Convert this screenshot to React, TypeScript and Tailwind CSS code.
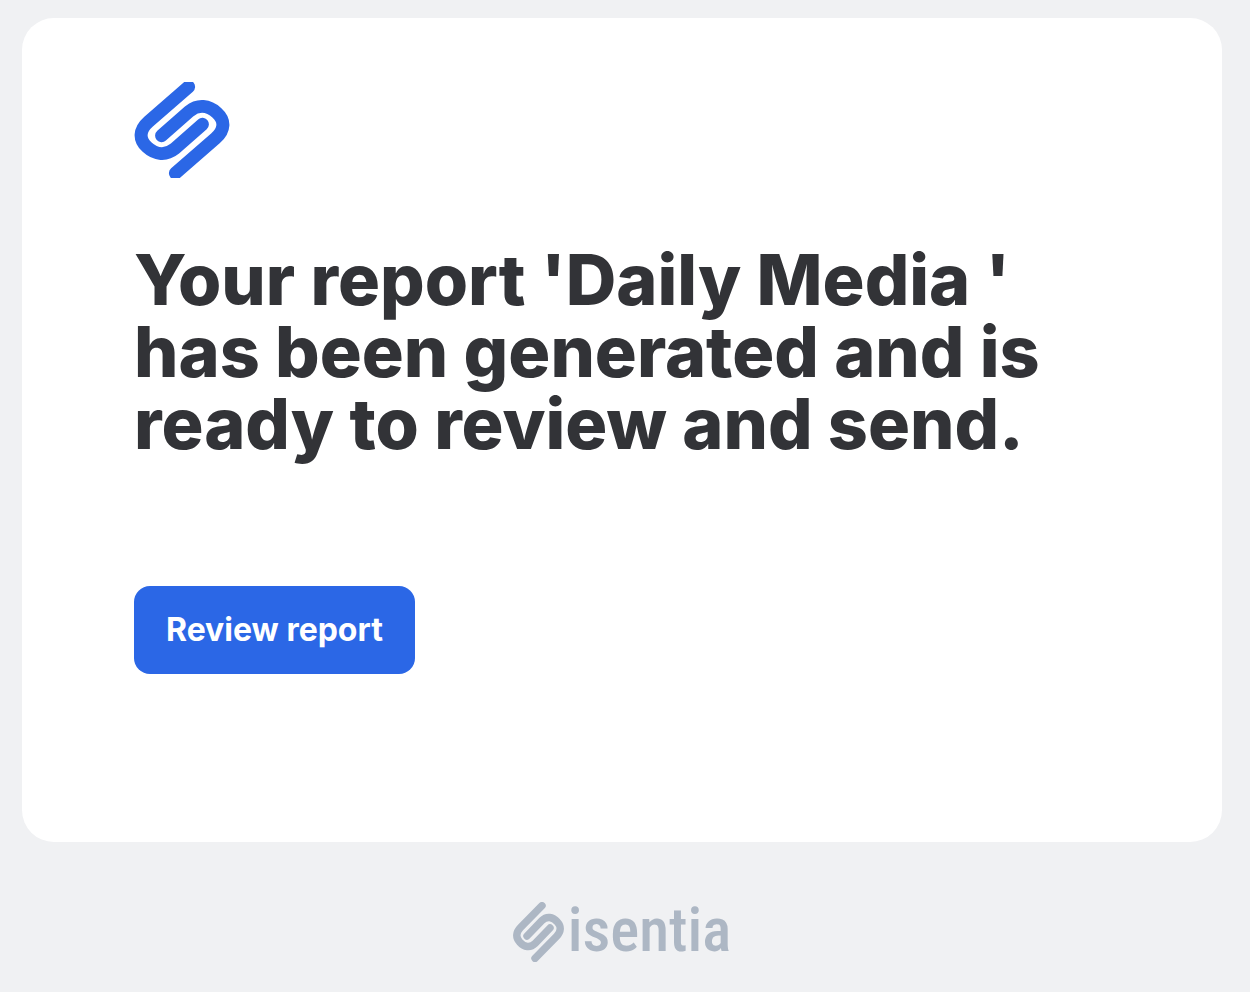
import React from "react";

function BrandMark() {
  return (
    <svg viewBox="0 0 96 96" className="block size-24" role="img" aria-label="Isentia">
      <g fill="none" stroke="#2b67e6" strokeWidth="13" strokeLinecap="round">
        <path d="M54.6 4.8 L14.6 39.6 C5 48 4.8 57.6 13 65 C21.4 72.8 32 73.8 40.6 66.8 L68.4 42.3" />
        <path d="M41.4 91.2 L81.4 56.4 C91 48 91.2 38.4 83 31 C74.6 23.2 64 22.2 55.4 29.2 L27.6 53.7" />
      </g>
    </svg>
  );
}

function FooterMark() {
  return (
    <svg viewBox="0 0 51 60" className="block h-[60px] w-[51px] shrink-0" aria-hidden="true">
      <g fill="none" stroke="#adb7c4" strokeWidth="7.4" strokeLinecap="round">
        <path d="M29 3.7 L7.4 25.6 C2.8 30.4 2.6 35.6 6.6 40 C11.2 45.4 17.4 46.2 22.2 41.4 L37 26" />
        <path d="M22 56.3 L43.6 34.4 C48.2 29.6 48.4 24.4 44.4 20 C39.8 14.6 33.6 13.8 28.8 18.6 L14 34" />
      </g>
    </svg>
  );
}

export default function App() {
  return (
    <div className="min-h-screen bg-[#f0f1f3] pt-[18px] pr-7 pb-[30px] pl-[22px] font-['Inter',sans-serif]">
      <main className="rounded-[32px] bg-white px-28 pt-16 pb-[168px]">
        <BrandMark />
        <h1 className="mt-[66px] text-[70px] leading-[72px] font-extrabold text-[#323337]">
          Your report 'Daily Media '
          <br />
          has been generated and is
          <br />
          ready to review and send.
        </h1>
        <a
          href="#report"
          className="mt-[126px] inline-flex h-22 items-center rounded-2xl bg-[#2b67e6] px-8 text-[32px] leading-10 font-bold text-white"
        >
          Review report
        </a>
      </main>
      <footer className="mt-[60px] flex items-start justify-center gap-1">
        <FooterMark />
        <span className="font-['Roboto_Condensed','Roboto',sans-serif] text-[61px] leading-[56px] font-medium text-[#adb7c4]">
          isentia
        </span>
      </footer>
    </div>
  );
}
